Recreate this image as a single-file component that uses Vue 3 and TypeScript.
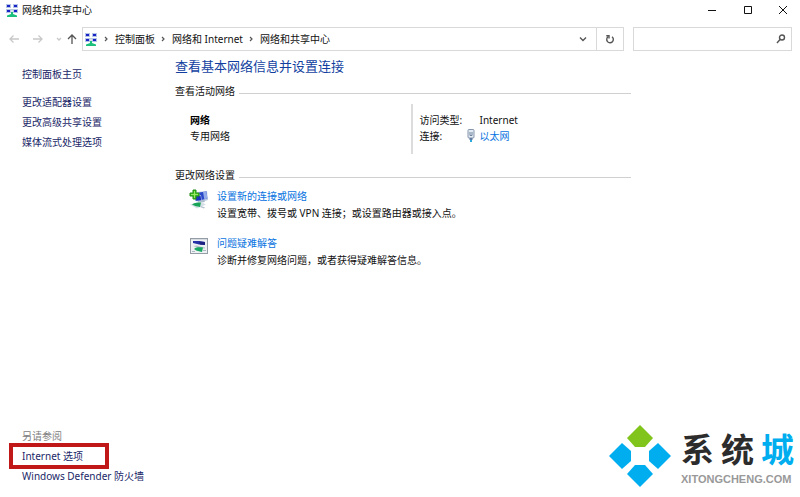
<script setup lang="ts">
import { ref } from 'vue'

const crumbs: string[] = ['控制面板', '网络和 Internet', '网络和共享中心']
const tasks: string[] = ['更改适配器设置', '更改高级共享设置', '媒体流式处理选项']
const related = [
  { label: 'Internet 选项', marked: true },
  { label: 'Windows Defender 防火墙', marked: false },
]
const query = ref<string>('')
</script>

<template>
  <div class="window">
    <svg class="defs" width="0" height="0" aria-hidden="true">
      <symbol id="center-icon" viewBox="0 0 12 13">
        <path d="M2 5.500h8M6 5v5" stroke="#b9c9d6" stroke-width="1" fill="none" />
        <g fill="#b4c5e8">
          <rect x="0" y="0" width="5" height="4" /><rect x="7" y="0" width="5" height="4" />
          <rect x="0" y="5" width="5" height="4" /><rect x="7" y="5" width="5" height="4" />
        </g>
        <g fill="#1a23c4">
          <rect x="1" y="1" width="3" height="2" /><rect x="8" y="1" width="3" height="2" />
          <rect x="1" y="6" width="3" height="2" /><rect x="8" y="6" width="3" height="2" />
        </g>
        <path d="M5 8h2v2l4 1.500V13H1v-1.500L5 10z" fill="#1cc07c" />
      </symbol>
    </svg>

    <header class="titlebar">
      <svg class="app-icon" width="12" height="13"><use href="#center-icon" /></svg>
      <h1 class="caption">网络和共享中心</h1>
      <div class="controls">
        <button type="button" aria-label="最小化">
          <svg width="10" height="10" viewBox="0 0 10 10"><path d="M1 5.500h8" /></svg>
        </button>
        <button type="button" aria-label="最大化">
          <svg width="10" height="10" viewBox="0 0 10 10"><path d="M1.500 1.500h7v7h-7z" /></svg>
        </button>
        <button type="button" aria-label="关闭">
          <svg width="10" height="10" viewBox="0 0 10 10"><path d="M1 1l8 8M9 1l-8 8" /></svg>
        </button>
      </div>
    </header>

    <div class="toolbar">
      <nav class="history" aria-label="导航">
        <button type="button" class="faint" aria-label="后退">
          <svg width="12" height="12" viewBox="0 0 12 12"><path d="M11 6H2M5.500 2.500L2 6l3.500 3.500" /></svg>
        </button>
        <button type="button" class="faint" aria-label="前进">
          <svg width="12" height="12" viewBox="0 0 12 12"><path d="M1 6h9M6.500 2.500L10 6 6.500 9.500" /></svg>
        </button>
        <button type="button" class="faint recent" aria-label="最近的位置">
          <svg width="6" height="6" viewBox="0 0 6 6"><path d="M1 2l2 2 2-2" /></svg>
        </button>
        <button type="button" class="up" aria-label="上移">
          <svg width="12" height="12" viewBox="0 0 12 12"><path d="M6 11V2M2 6l4-4 4 4" /></svg>
        </button>
      </nav>
      <div class="address">
        <svg width="12" height="13"><use href="#center-icon" /></svg>
        <ol class="crumbs">
          <li v-for="crumb in crumbs" :key="crumb">
            <svg width="6" height="8" viewBox="0 0 6 8"><path d="M2 2l2 2-2 2" /></svg>
            <a href="#">{{ crumb }}</a>
          </li>
        </ol>
        <button type="button" class="drop" aria-label="以前的位置">
          <svg width="8" height="8" viewBox="0 0 8 8"><path d="M1 2.500l3 3 3-3" /></svg>
        </button>
        <button type="button" class="refresh" aria-label="刷新">
          <svg width="10" height="11" viewBox="0 0 10 11">
            <path d="M7 2.800A3.300 3.300 0 1 1 3.200 2.700" /><path d="M1.300 1.700h2.700v2.700" />
          </svg>
        </button>
      </div>
      <div class="search">
        <input v-model="query" type="search" aria-label="搜索控制面板" />
        <svg width="10" height="10" viewBox="0 0 10 10">
          <circle cx="6" cy="3.500" r="2.500" /><path d="M4 5.500L1 9" />
        </svg>
      </div>
    </div>

    <div class="body">
      <aside class="side">
        <a class="home" href="#">控制面板主页</a>
        <ul class="links">
          <li v-for="task in tasks" :key="task"><a href="#">{{ task }}</a></li>
        </ul>
        <div class="related">
          <h2>另请参阅</h2>
          <ul class="links">
            <li v-for="item in related" :key="item.label" :class="{ marked: item.marked }">
              <a href="#">{{ item.label }}</a>
            </li>
          </ul>
        </div>
      </aside>

      <main class="content">
        <h2 class="heading">查看基本网络信息并设置连接</h2>

        <section>
          <h3 class="rule">查看活动网络</h3>
          <div class="active">
            <div class="network">
              <strong>网络</strong>
              <span>专用网络</span>
            </div>
            <dl class="facts">
              <dt>访问类型:</dt>
              <dd>Internet</dd>
              <dt>连接:</dt>
              <dd>
                <svg class="plug" width="8" height="13" viewBox="0 0 8 13">
                  <rect x="1" y="0.500" width="6" height="8.500" rx="1" fill="#e3ebf4" stroke="#8595aa" />
                  <path d="M3 3v3.500h2V3" fill="none" stroke="#73849c" />
                  <path d="M2.500 9h3v2h-3z" fill="#607ea0" />
                  <path d="M3 11h2v2H3z" fill="#29a9de" />
                </svg>
                <a href="#">以太网</a>
              </dd>
            </dl>
          </div>
        </section>

        <section>
          <h3 class="rule">更改网络设置</h3>
          <div class="option">
            <svg width="20" height="20" viewBox="0 0 20 20">
              <path d="M8 3l10-1 1 9-6 2-6-1z" fill="#bccbe3" />
              <path d="M10 3.500l7.500-1 .8 7-6 1.500z" fill="#2a48c9" />
              <path d="M14 3l3.500-.5.800 7-3 .7z" fill="#95acea" />
              <path d="M5 7l7-1 .8 6.500L6 12z" fill="#c5d4eb" />
              <path d="M6 7.500l5.500-1 .8 5-5.500.3z" fill="#1d35bd" />
              <path d="M9 12l6-1 1 2-7 1z" fill="#aebdcc" />
              <path d="M1 15.500l10-3 6 3-9 4z" fill="#d5dfe8" />
              <path d="M3 15.500c3-2 6-2 9-2l-1 4.500c-3-1-5-.5-8-2.500z" fill="#18a557" />
              <path d="M12 17l4 1.500-1 1-4-1.500z" fill="#b4c2ce" />
              <path d="M4 1h3v3h3v3H7v3H4V7H1V4h3z" fill="#43c51e" stroke="#218d16" />
              <path d="M5.500 2v7M2 5.500h7" stroke="#98e568" />
            </svg>
            <div>
              <a href="#">设置新的连接或网络</a>
              <p>设置宽带、拨号或 VPN 连接；或设置路由器或接入点。</p>
            </div>
          </div>
          <div class="option">
            <svg width="20" height="20" viewBox="0 0 20 20">
              <rect x="1.500" y="2.500" width="17" height="15" fill="#eef1f3" stroke="#949da6" />
              <path d="M2 3.500h16" stroke="#d6dce0" />
              <path d="M4 5h6l6 1v3l-6-.5L4 7z" fill="#2532a8" />
              <path d="M10 5.500l6 .5v3l-5-.5z" fill="#1d2380" />
              <path d="M4 10l4-.5 3 1 5 1v1l-6-.5z" fill="#b3c0ca" />
              <path d="M5 13c3-2.500 6-1.500 9-1.500l-1 4.500c-3-1-5-.5-8-3z" fill="#18a861" />
              <path d="M3 15.500h3M14 14.500h3" stroke="#aeb9c2" />
            </svg>
            <div>
              <a href="#">问题疑难解答</a>
              <p>诊断并修复网络问题，或者获得疑难解答信息。</p>
            </div>
          </div>
        </section>
      </main>
    </div>

    <div class="brand">
      <svg width="64" height="64" viewBox="0 0 64 64" aria-hidden="true">
        <path d="M32 1l13 13-8 9H27l-8-9z" fill="#80c41c" />
        <path d="M14 19l9 8v10l-9 8L1 32z" fill="#00aeef" />
        <path d="M50 19l13 13-13 13-9-8V27z" fill="#00aeef" />
        <path d="M27 41h10l8 9-13 13-13-13z" fill="#00aeef" />
      </svg>
      <div class="brand-text">
        <div class="brand-name"><span>系</span><span>统</span><span class="accent">城</span></div>
        <div class="brand-site">XITONGCHENG.COM</div>
      </div>
    </div>
  </div>
</template>

<style>
body {
  margin: 0;
  background: #fff;
}
</style>

<style scoped>
.window {
  position: relative;
  display: flex;
  flex-direction: column;
  min-height: 100vh;
  background: #fff;
  color: #111;
  font: 10px/16px "Noto Sans", "Noto Sans CJK SC", sans-serif;
}
.defs {
  position: absolute;
}
h1, h2, h3, p, ul, ol, dl, dd {
  margin: 0;
  padding: 0;
  font-size: inherit;
  font-weight: 400;
  list-style: none;
}
a {
  color: #0873e1;
  text-decoration: none;
}
svg {
  flex: none;
}
button {
  display: flex;
  align-items: center;
  justify-content: center;
  padding: 0;
  border: 0;
  background: none;
}
button path,
.crumbs path,
.search svg {
  fill: none;
  stroke: #555;
}
.titlebar {
  display: flex;
  align-items: center;
  height: 20px;
  padding-left: 6px;
}
.caption {
  margin-left: 4px;
}
.controls {
  display: flex;
  margin-left: auto;
}
.controls button {
  width: 36px;
  height: 20px;
}
.controls button:last-child {
  width: 34px;
}
.controls path {
  stroke: #111;
}
.toolbar {
  display: flex;
  align-items: center;
  margin-top: 7px;
  padding: 0 8px;
}
.history {
  display: flex;
  align-items: center;
  width: 74px;
}
.history button {
  width: 12px;
  height: 22px;
  margin-right: 12px;
}
.history .recent {
  width: 6px;
  margin-right: 4px;
}
.history .up {
  margin-right: 0;
}
.history path {
  stroke-width: 1.3;
}
.history .faint path {
  stroke: #c8c8c8;
}
.address,
.search {
  display: flex;
  align-items: center;
  box-sizing: border-box;
  height: 24px;
  border: 1px solid #d9d9d9;
}
.address {
  flex: 1;
  padding-left: 2px;
}
.crumbs {
  display: flex;
  gap: 5px;
  margin-left: 6px;
}
.crumbs li {
  display: flex;
  align-items: center;
  gap: 6px;
}
.crumbs path {
  stroke-width: 1.2;
}
.crumbs a {
  color: #111;
}
.drop {
  width: 26px;
  height: 22px;
  margin-left: auto;
}
.drop path,
.refresh path {
  stroke-width: 1.4;
}
.refresh {
  width: 27px;
  height: 22px;
  border-left: 1px solid #d9d9d9;
}
.search {
  width: 159px;
  margin-left: 9px;
  padding-right: 5px;
}
.search input {
  flex: 1;
  min-width: 0;
  border: 0;
  outline: 0;
  background: none;
  font: inherit;
}
.search svg {
  stroke-width: 1.4;
}
.body {
  display: flex;
  flex: 1;
}
.side {
  display: flex;
  flex-direction: column;
  box-sizing: border-box;
  width: 175px;
  padding: 13px 0 11px 22px;
  line-height: 20px;
}
.side a {
  color: #1a2768;
}
.home {
  margin-bottom: 8px;
}
.related {
  margin-top: auto;
}
.related h2 {
  color: #808080;
}
.marked {
  position: relative;
}
.marked::after {
  content: "";
  position: absolute;
  top: -3px;
  left: -13px;
  box-sizing: border-box;
  width: 100px;
  height: 26px;
  border: 4px solid #c01818;
  pointer-events: none;
}
.content {
  flex: 1;
  max-width: 456px;
  padding-top: 5px;
}
.heading {
  color: #123f9f;
  font-size: 13px;
  line-height: 20px;
}
.rule {
  display: flex;
  align-items: center;
  gap: 4px;
  margin-top: 7px;
}
.rule::after {
  content: "";
  flex: 1;
  height: 1px;
  margin-top: 4px;
  background: #d0d0d0;
}
.active {
  display: grid;
  grid-template-columns: 1fr 1fr;
  margin: 5px 0 13px;
  padding-left: 15px;
}
.network {
  display: flex;
  flex-direction: column;
  padding-top: 8px;
}
.network strong {
  color: #000;
}
.facts {
  display: grid;
  grid-template-columns: 60px 1fr;
  align-content: start;
  box-sizing: border-box;
  height: 50px;
  padding: 8px 0 0 7px;
  border-left: 2px solid #dcdcdc;
}
.facts dd {
  position: relative;
}
.plug {
  position: absolute;
  top: 1px;
  left: -13px;
}
.option {
  display: flex;
  gap: 7px;
  padding: 5px 0 0 14px;
}
.option + .option {
  padding-top: 13px;
}
.option svg {
  margin: 1px 1px 0 0;
}
.option a {
  display: block;
}
.option p {
  margin-top: 1px;
  line-height: 17px;
}
.brand {
  position: absolute;
  right: 6px;
  bottom: 9px;
  display: flex;
  gap: 9px;
}
.brand-text {
  padding-top: 4px;
}
.brand-name {
  display: flex;
  gap: 7px;
  color: #2c2c2c;
  font: 700 33px/40px "Noto Sans CJK SC", sans-serif;
}
.accent {
  color: #00aeef;
}
.brand-site {
  padding-top: 3px;
  color: #999;
  font: 700 11px/16px "Liberation Sans", Arial, sans-serif;
}
</style>
